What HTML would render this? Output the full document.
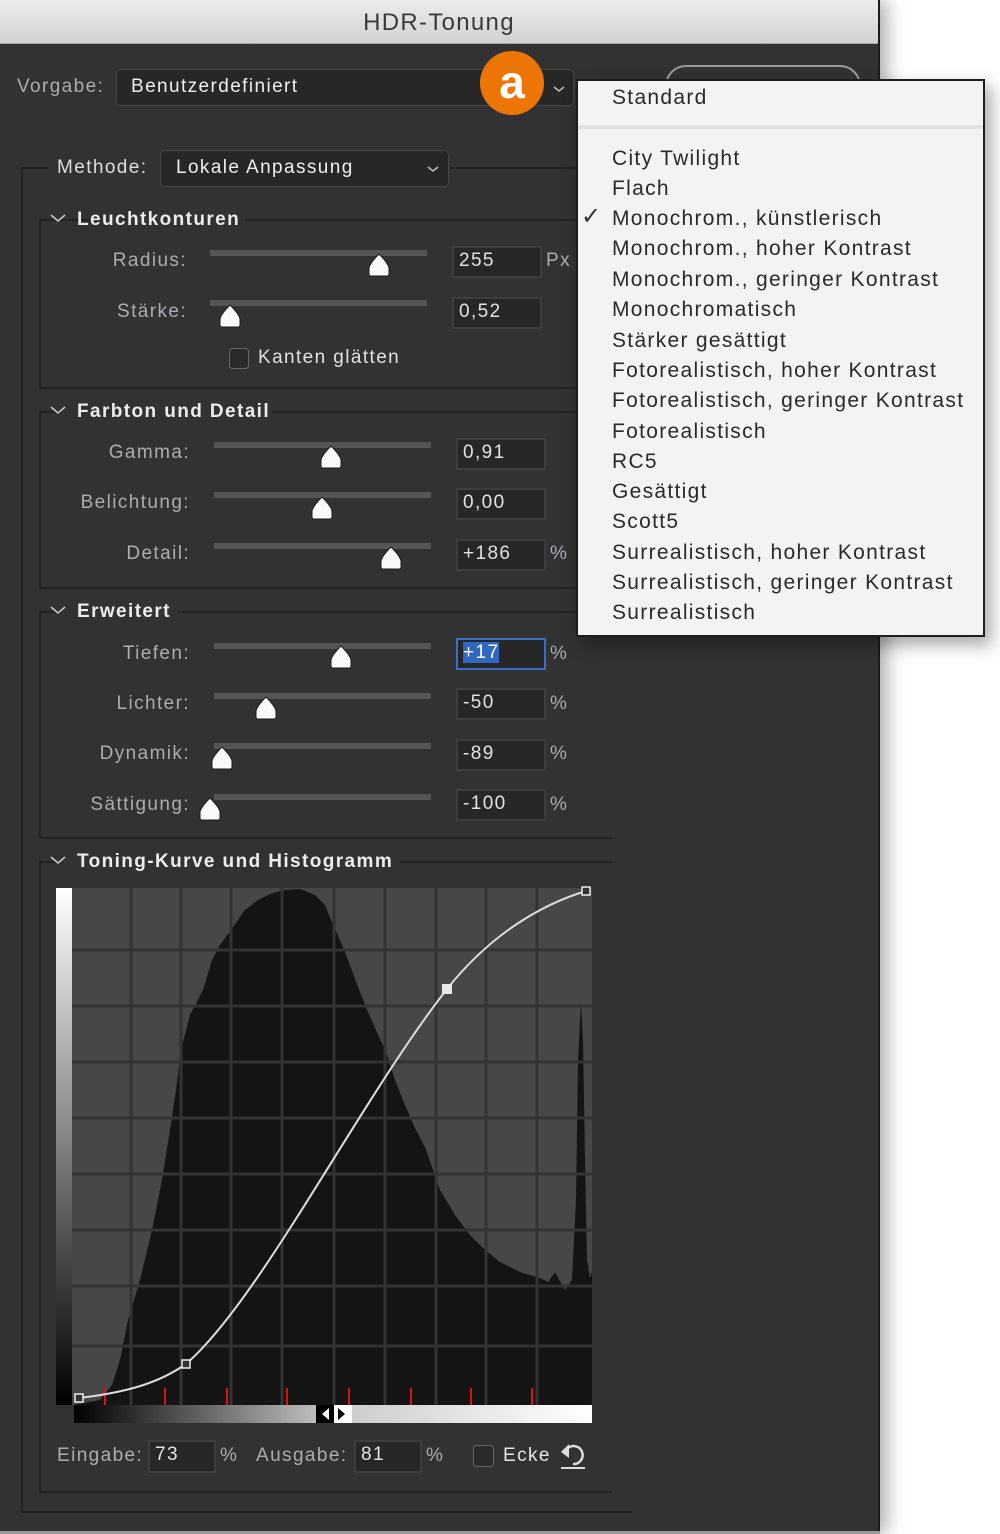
<!DOCTYPE html>
<html><head><meta charset="utf-8">
<style>
*{margin:0;padding:0;box-sizing:border-box}
body{width:1000px;height:1534px;background:#fff;position:relative;overflow:hidden;font-family:"Liberation Sans",sans-serif;letter-spacing:1.4px}
.a{position:absolute;white-space:nowrap}
.lbl{font-size:19px;color:#a9adb2;line-height:24px}
.lr{text-align:right}
.hd{font-size:19px;color:#ececec;font-weight:bold;line-height:24px}
.inp{position:absolute;background:#272727;border:2px solid #3d3d3d;color:#e2e2e2;font-size:19px;line-height:26px;padding-left:5px}
.mi{position:absolute;left:612px;font-size:21px;color:#2a2a2a;line-height:26px;letter-spacing:1.3px}
</style></head><body>
<div class="a" style="left:0;top:0;width:880px;height:1534px;background:#323232;border-right:2px solid #1c1c1c;box-shadow:6px 0 18px rgba(0,0,0,.35)"></div>
<div class="a" style="left:0;top:0;width:878px;height:44px;background:linear-gradient(#ececec,#d2d2d2);border-bottom:1px solid #a8a8a8"></div>
<div class="a" style="left:0;top:9px;width:878px;text-align:center;font-size:24px;color:#3a3a3a;line-height:28px;letter-spacing:1.3px">HDR-Tonung</div>
<div class="a" style="left:0;top:1531px;width:880px;height:3px;background:#9a9a9a"></div>

<svg class="a" style="left:0;top:0" width="1000" height="1534" viewBox="0 0 1000 1534">
<rect x="666" y="66" width="194" height="60" rx="20" fill="none" stroke="#9a9a9a" stroke-width="2"/>
<rect x="116.5" y="69.5" width="457" height="36" rx="4" fill="#272727" stroke="#454545"/>
<path d="M554 87l5 4 5-4" fill="none" stroke="#bbb" stroke-width="1.5"/>
<rect x="160.5" y="150.5" width="288" height="36" rx="4" fill="#272727" stroke="#454545"/>
<path d="M428 167l5 4 5-4" fill="none" stroke="#bbb" stroke-width="1.5"/>
<g stroke="#222" stroke-width="2" fill="none">
<path d="M48 168H22V1512H632"/>
<path d="M450 168H600"/>
<path d="M100 220H40V388H612M245 220H612"/>
<path d="M60 412H40V588H612M272 412H612"/>
<path d="M60 612H40V838H612M178 612H612"/>
<path d="M60 862H40V1492H612M400 862H612"/>
</g>
<g fill="none" stroke="#c8c8c8" stroke-width="1.6">
<path d="M51 215l7 6 7-6"/><path d="M51 407l7 6 7-6"/><path d="M51 607l7 6 7-6"/><path d="M51 857l7 6 7-6"/>
</g>
<g fill="#555">
<rect x="210" y="250" width="217" height="6"/>
<rect x="210" y="300" width="217" height="6"/>
<rect x="214" y="442" width="217" height="6"/>
<rect x="214" y="492" width="217" height="6"/>
<rect x="214" y="543" width="217" height="6"/>
<rect x="214" y="643" width="217" height="6"/>
<rect x="214" y="693" width="217" height="6"/>
<rect x="214" y="743" width="217" height="6"/>
<rect x="214" y="794" width="217" height="6"/>
</g>
<defs><path id="th" d="M0 -11 C-2 -9 -9 -2 -10 3 V9 Q-10 11 -8 11 H8 Q10 11 10 9 V3 C9 -2 2 -9 0 -11Z" fill="#fafafa" stroke="#1a1a1a" stroke-width="1"/></defs>
<use href="#th" x="379" y="265"/>
<use href="#th" x="230" y="316"/>
<use href="#th" x="331" y="457"/>
<use href="#th" x="322" y="508"/>
<use href="#th" x="391" y="558"/>
<use href="#th" x="341" y="657"/>
<use href="#th" x="266" y="708"/>
<use href="#th" x="222" y="758"/>
<use href="#th" x="210" y="809"/>
<rect x="229.5" y="348.5" width="19" height="20" rx="3" fill="#2a2a2a" stroke="#666"/>
<rect x="473.5" y="1445.5" width="20" height="21" rx="3" fill="#2a2a2a" stroke="#666"/>
<defs>
<linearGradient id="vg" x1="0" y1="0" x2="0" y2="1"><stop offset="0" stop-color="#fff"/><stop offset="1" stop-color="#000"/></linearGradient>
<linearGradient id="hg1" x1="0" y1="0" x2="1" y2="0"><stop offset="0" stop-color="#000"/><stop offset="1" stop-color="#bdbdbd"/></linearGradient>
<linearGradient id="hg2" x1="0" y1="0" x2="1" y2="0"><stop offset="0" stop-color="#cdcdcd"/><stop offset="1" stop-color="#fff"/></linearGradient>
</defs>
<rect x="56" y="888" width="16" height="517" fill="url(#vg)"/>
<rect x="72" y="888" width="520" height="517" fill="#474747"/>
<polygon fill="#141414" points="74,1405 100,1400 112,1385 120,1360 128,1320 140,1280 152,1230 162,1180 170,1130 176,1090 181,1050 190,1015 203,990 212,960 220,945 231,930 245,910 258,900 270,894 285,890 300,889 315,895 325,905 333,925 340,940 348,960 358,987 368,1012 379,1037 386,1052 395,1080 405,1105 415,1128 425,1147 440,1190 455,1215 470,1235 485,1250 500,1262 520,1272 540,1278 548,1282 555,1272 565,1290 572,1280 576,1200 578,1060 581,1003 583,1040 585,1160 587,1260 590,1278 592,1272 592,1405"/>
<g stroke="#333" stroke-width="3">
<path d="M131 888V1405M181 888V1405M231 888V1405M282 888V1405M334 888V1405M385 888V1405M436 888V1405M486 888V1405M537 888V1405"/>
<path d="M72 950H592M72 1006H592M72 1062H592M72 1118H592M72 1174H592M72 1230H592M72 1286H592M72 1346H592"/>
</g>
<g stroke="#e01010" stroke-width="2">
<path d="M105 1388V1405M165 1388V1405M227 1388V1405M287 1388V1405M349 1388V1405M411 1388V1405M471 1388V1405M532 1388V1405"/>
</g>
<path d="M79 1398C130 1392 160 1382 186 1364C260 1300 360 1100 447 989C490 935 540 905 586 891" fill="none" stroke="#ddd" stroke-width="2"/>
<rect x="75" y="1394" width="8" height="8" fill="#333" stroke="#eee" stroke-width="1.5"/>
<rect x="182" y="1360" width="8" height="8" fill="#333" stroke="#eee" stroke-width="1.5"/>
<rect x="442" y="984" width="10" height="10" fill="#e8e8e8"/>
<rect x="582" y="887" width="8" height="8" fill="#333" stroke="#eee" stroke-width="1.5"/>
<rect x="74" y="1405" width="242" height="18" fill="url(#hg1)"/>
<rect x="352" y="1405" width="240" height="18" fill="url(#hg2)"/>
<rect x="316" y="1405" width="18" height="18" fill="#000"/>
<rect x="334" y="1405" width="18" height="18" fill="#fff"/>
<path d="M329 1408L322 1414L329 1420Z" fill="#fff"/>
<path d="M338 1408L345 1414L338 1420Z" fill="#000"/>
<path d="M568 1448A9 9 0 1 1 573 1464" fill="none" stroke="#ddd" stroke-width="2.5"/>
<path d="M561 1452L569 1444L569 1458Z" fill="#ddd"/>
<path d="M561 1468H585" stroke="#ddd" stroke-width="2"/>
<circle cx="512" cy="83" r="32" fill="#ec7506"/>
</svg>
<div class="a" style="left:480px;top:54px;width:64px;text-align:center;font-size:46px;font-weight:bold;color:#fff;line-height:56px;letter-spacing:0">a</div>

<div class="a lbl" style="left:17px;top:75px">Vorgabe:</div>
<div class="a" style="left:131px;top:75px;font-size:19px;color:#eee;line-height:24px">Benutzerdefiniert</div>
<div class="a lbl" style="left:57px;top:156px;color:#ddd">Methode:</div>
<div class="a" style="left:176px;top:156px;font-size:19px;color:#eee;line-height:24px">Lokale Anpassung</div>

<div class="a hd" style="left:77px;top:208px">Leuchtkonturen</div>
<div class="a lbl lr" style="left:60px;top:249px;width:127px">Radius:</div>
<div class="a lbl lr" style="left:60px;top:300px;width:127px">Stärke:</div>
<div class="inp" style="left:452px;top:246px;width:90px;height:32px">255</div>
<div class="a lbl" style="left:546px;top:249px">Px</div>
<div class="inp" style="left:452px;top:297px;width:90px;height:32px">0,52</div>
<div class="a" style="left:258px;top:346px;font-size:19px;color:#e0e0e0;line-height:24px">Kanten glätten</div>

<div class="a hd" style="left:77px;top:400px">Farbton und Detail</div>
<div class="a lbl lr" style="left:40px;top:441px;width:150px">Gamma:</div>
<div class="a lbl lr" style="left:40px;top:491px;width:150px">Belichtung:</div>
<div class="a lbl lr" style="left:40px;top:542px;width:150px">Detail:</div>
<div class="inp" style="left:456px;top:438px;width:90px;height:32px">0,91</div>
<div class="inp" style="left:456px;top:488px;width:90px;height:32px">0,00</div>
<div class="inp" style="left:456px;top:539px;width:90px;height:32px">+186</div>
<div class="a lbl" style="left:550px;top:542px">%</div>

<div class="a hd" style="left:77px;top:600px">Erweitert</div>
<div class="a lbl lr" style="left:40px;top:642px;width:150px">Tiefen:</div>
<div class="a lbl lr" style="left:40px;top:692px;width:150px">Lichter:</div>
<div class="a lbl lr" style="left:40px;top:742px;width:150px">Dynamik:</div>
<div class="a lbl lr" style="left:40px;top:793px;width:150px">Sättigung:</div>
<div class="inp" style="left:456px;top:638px;width:90px;height:32px;border-color:#3a6fc7"><span style="background:#2e68c0;color:#fff">+17</span></div>
<div class="inp" style="left:456px;top:688px;width:90px;height:32px">-50</div>
<div class="inp" style="left:456px;top:739px;width:90px;height:32px">-89</div>
<div class="inp" style="left:456px;top:789px;width:90px;height:32px">-100</div>
<div class="a lbl" style="left:550px;top:642px">%</div>
<div class="a lbl" style="left:550px;top:692px">%</div>
<div class="a lbl" style="left:550px;top:742px">%</div>
<div class="a lbl" style="left:550px;top:793px">%</div>

<div class="a hd" style="left:77px;top:850px">Toning-Kurve und Histogramm</div>

<div class="a lbl" style="left:57px;top:1444px">Eingabe:</div>
<div class="inp" style="left:148px;top:1440px;width:68px;height:33px">73</div>
<div class="a lbl" style="left:220px;top:1444px">%</div>
<div class="a lbl" style="left:256px;top:1444px">Ausgabe:</div>
<div class="inp" style="left:354px;top:1440px;width:68px;height:33px">81</div>
<div class="a lbl" style="left:426px;top:1444px">%</div>
<div class="a" style="left:503px;top:1444px;font-size:19px;color:#e6e6e6;line-height:24px">Ecke</div>

<div class="a" style="left:576px;top:79px;width:409px;height:558px;background:#f4f3f3;border:2px solid #1e1e1e;box-shadow:6px 8px 16px rgba(0,0,0,.35)"></div>
<div class="a" style="left:578px;top:125px;width:405px;height:4px;background:#e2e2e2"></div>
<div class="mi" style="top:85px">Standard</div>
<div class="mi" style="top:146px">City Twilight</div>
<div class="mi" style="top:176px">Flach</div>
<div class="a" style="left:581px;top:203px;font-size:24px;color:#333;line-height:28px">✓</div>
<div class="mi" style="top:206px">Monochrom., künstlerisch</div>
<div class="mi" style="top:236px">Monochrom., hoher Kontrast</div>
<div class="mi" style="top:267px">Monochrom., geringer Kontrast</div>
<div class="mi" style="top:297px">Monochromatisch</div>
<div class="mi" style="top:328px">Stärker gesättigt</div>
<div class="mi" style="top:358px">Fotorealistisch, hoher Kontrast</div>
<div class="mi" style="top:388px">Fotorealistisch, geringer Kontrast</div>
<div class="mi" style="top:419px">Fotorealistisch</div>
<div class="mi" style="top:449px">RC5</div>
<div class="mi" style="top:479px">Gesättigt</div>
<div class="mi" style="top:509px">Scott5</div>
<div class="mi" style="top:540px">Surrealistisch, hoher Kontrast</div>
<div class="mi" style="top:570px">Surrealistisch, geringer Kontrast</div>
<div class="mi" style="top:600px">Surrealistisch</div>
</body></html>
